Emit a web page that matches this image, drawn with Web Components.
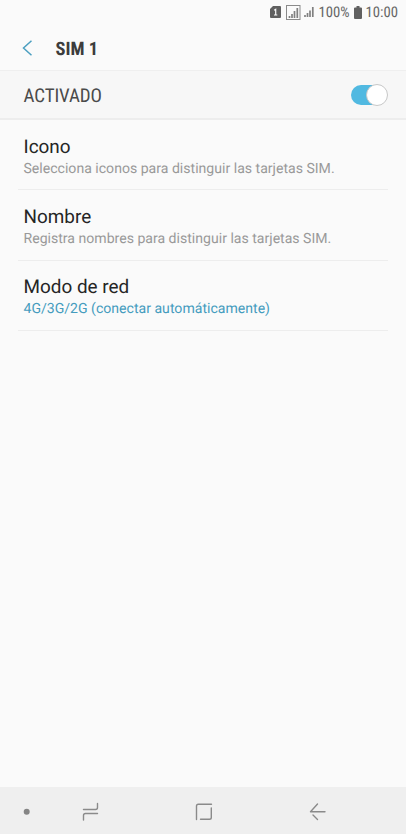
<!DOCTYPE html>
<html lang="es"><head><meta charset="utf-8"><title>SIM 1</title>
<style>
html,body{margin:0;height:100%;background:#fafafa;overflow:hidden}
body{font-family:Roboto,"Liberation Sans",sans-serif;color:#252525;text-rendering:geometricPrecision}
</style></head><body>
<sim-screen></sim-screen>
<script>
const define=(name,html)=>customElements.define(name,class extends HTMLElement{
  constructor(){super();this.attachShadow({mode:'open'}).innerHTML=html;}
});

define('status-bar',`<style>
:host{display:flex;height:26px;box-sizing:border-box;padding:0 8px 2px 0;align-items:center;justify-content:flex-end;color:#666;font:14.700px/24px "Roboto Condensed",Roboto,sans-serif;font-stretch:75%}
svg{display:block;flex:none}
.sim{margin-right:5px}.sig{margin-right:3px}.sig2{margin-right:5px}.bat{margin:0 4px 0 4px}
</style>
<svg class="sim" width="11" height="12" viewBox="0 0 11 12"><path d="M3 0H10Q11 0 11 1V11Q11 12 10 12H1Q0 12 0 11V3Z" fill="#606060"/><path d="M4.100 4.300L5.700 3.400V9M4 9H7.300" fill="none" stroke="#fafafa" stroke-width="1.200"/></svg>
<svg class="sig" width="15" height="15" viewBox="0 0 15 15"><rect x=".5" y=".5" width="13.500" height="14" fill="none" stroke="#8a8a8a"/><path d="M3.500 13v-2M6 13V9M8.500 13V6M11.300 13V3" stroke="#808080" stroke-width="1.700"/></svg>
<svg class="sig2" width="10" height="12" viewBox="0 0 10 12"><path d="M1 11V9M3.500 11V7M6 11V4.500M8.800 11V1" stroke="#808080" stroke-width="1.700"/></svg>
<span>100%</span>
<svg class="bat" width="8" height="13" viewBox="0 0 8 13"><path d="M2.500 0H5.500V1.500H7Q8 1.500 8 2.500V12Q8 13 7 13H1Q0 13 0 12V2.500Q0 1.500 1 1.500H2.500Z" fill="#606060"/></svg>
<span>10:00</span>`);

define('app-header',`<style>
:host{display:flex;height:44px;align-items:center;padding-left:21px;font:bold 18.500px/24px "Roboto Condensed",Roboto,sans-serif;font-stretch:75%;color:#3c3c3c}
svg{display:block;margin:0 22.500px 1px 0}
span{padding-top:1px}
</style><svg width="12" height="16" viewBox="0 0 12 16"><path d="M10.500 .8L2.500 8L10.500 15.200" fill="none" stroke="#4b9fc0" stroke-width="1.500"/></svg><span><slot></slot></span>`);

define('toggle-switch',`<style>
:host{display:flex;justify-content:flex-end;align-items:center;width:36px;height:20px;border-radius:10px;background:#51b9e1;margin-right:19px}
i{box-sizing:border-box;width:22px;height:22px;margin-right:-1px;border-radius:50%;background:#fff;border:1px solid #c8c8c8;flex:none}
</style><i></i>`);

define('master-row',`<style>
:host{display:flex;box-sizing:border-box;height:50px;border-top:1px solid #efefef;border-bottom:2px solid #ededed;background:#f7f7f7;align-items:center;justify-content:space-between;padding-left:23.500px;font:19px/24px "Roboto Condensed",Roboto,sans-serif;font-stretch:75%;letter-spacing:-.1px;color:#4a4a4a}
span{padding-top:2px}
</style><span><slot></slot></span><toggle-switch></toggle-switch>`);

define('setting-item',`<style>
:host{display:block;box-sizing:border-box;height:70.400px;margin:0 18px;padding:14.600px 6px 0 5.500px;border-bottom:1px solid #ededed;white-space:nowrap}
.t{font-size:18.900px;line-height:24px;color:#252525}
.s{font-size:14.080px;line-height:20px;color:var(--sub,#999)}
</style><div class="t"><slot name="title"></slot></div><div class="s"><slot></slot></div>`);

define('nav-bar',`<style>
:host{display:flex;box-sizing:border-box;height:47px;padding-top:2px;background:#efefef;align-items:center;padding-left:23px}
svg{display:block;flex:none}
</style>
<svg width="330" height="30" viewBox="23 797 330 30" fill="none" stroke="#8a8a8a" stroke-width="1.400" stroke-linecap="round" stroke-linejoin="round"><circle cx="26.700" cy="811.700" r="3" fill="#858585" stroke="none"/><path d="M83.500 809.500H95.500Q97.500 809.500 97.500 807.500V803.500M97.500 813.500H85.500Q83.500 813.500 83.500 815.500V820"/><path d="M196.500 819.500V806Q196.500 804.200 198.300 804.200H211.500M211.300 808V817.500Q211.300 819.300 209.500 819.300H200.500"/><path d="M325 811.700H310.500L317.500 804M313 815L317.500 819.500"/></svg>`);

define('sim-screen',`<style>
:host{display:flex;flex-direction:column;height:834px;width:406px;background:#fafafa}
main{flex:1}
</style>
<status-bar></status-bar>
<app-header>SIM 1</app-header>
<master-row>ACTIVADO</master-row>
<main>
<setting-item><span slot="title">Icono</span>Selecciona iconos para distinguir las tarjetas SIM.</setting-item>
<setting-item><span slot="title">Nombre</span>Registra nombres para distinguir las tarjetas SIM.</setting-item>
<setting-item style="--sub:#459cbe"><span slot="title">Modo de red</span>4G/3G/2G (conectar automáticamente)</setting-item>
</main>
<nav-bar></nav-bar>`);
</script></body></html>
